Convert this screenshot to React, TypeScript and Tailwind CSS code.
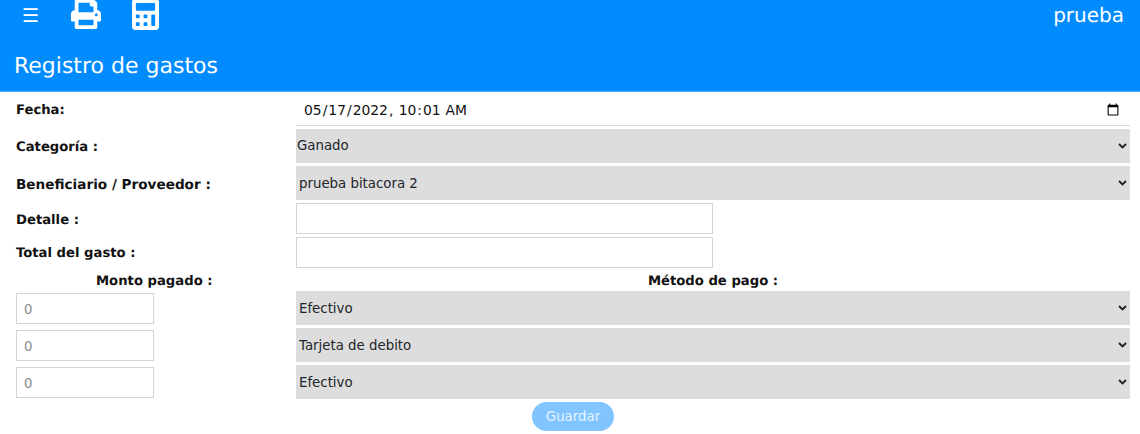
import { FaPrint, FaCalculator } from 'react-icons/fa';

const chevron = "bg-[url(data:image/svg+xml,%3Csvg%20xmlns=%27http://www.w3.org/2000/svg%27%20width=%279%27%20height=%276%27%3E%3Cpath%20d=%27M1%201l3.5%203.5%203.5-3.5%27%20fill=%27none%27%20stroke=%27%23222%27%20stroke-width=%271.9%27/%3E%3C/svg%3E)] bg-no-repeat bg-[position:right_3px_center]";
const selectCls = `h-[34px] flex-1 min-w-0 appearance-none bg-[#dddddd] ${chevron} border-0 text-[#212529] text-[13.33px] outline-none`;
const labelCls = "w-[280px] shrink-0 font-bold";

export default function App() {
    const pagos = ["Efectivo", "Tarjeta de debito", "Efectivo"];

    return (
        <div className="w-[1140px] h-[434px] overflow-hidden bg-white font-['DejaVu_Sans',sans-serif] text-[#111111] [text-rendering:geometricPrecision]">
            <header className="h-[92px] bg-[#008cff] border-b border-[#4db0ff] text-white">
                <div className="h-[53px] flex items-start">
                    <span className="ml-[22px] mt-[3px] w-[16px] text-[19px] leading-[26px]">☰</span>
                    <FaPrint className="ml-[33px] -mt-[1px] w-[30px] h-[30px]" />
                    <FaCalculator className="ml-[31px] -mt-[1px] w-[27px] h-[31px]" />
                    <span className="ml-auto mr-[16px] mt-[1px] text-[20px] leading-[28px]">prueba</span>
                </div>
                <h1 className="pl-[14px] pt-[1px] text-[22px] leading-[26px]">Registro de gastos</h1>
            </header>

            <form className="pl-[16px] pr-[10px] text-[13.2px]">
                <div className="flex items-center h-[34px] mb-[3px]">
                    <label className={`${labelCls} pt-[4px]`}>Fecha:</label>
                    <input
                        type="datetime-local"
                        defaultValue="2022-05-17T10:01"
                        className="flex-1 min-w-0 h-[34px] pl-[7px] pr-[8px] pt-[3px] border-b border-[#d8d8d8] text-[13.87px] outline-none"
                    />
                </div>
                <div className="flex items-center h-[34px] mb-[3px]">
                    <label className={`${labelCls} pt-[3px]`}>Categoría :</label>
                    <select className={`${selectCls} pl-[1px]`} defaultValue="Ganado"><option>Ganado</option></select>
                </div>
                <div className="flex items-center h-[34px] mb-[3px]">
                    <label className={`${labelCls} pt-[4px] text-[13.6px]`}>Beneficiario / Proveedor :</label>
                    <select className={`${selectCls} pl-[3px] pt-[1px]`} defaultValue="prueba bitacora 2"><option>prueba bitacora 2</option></select>
                </div>
                <div className="flex items-center h-[31px] mb-[3px]">
                    <label className={`${labelCls} pt-[4px]`}>Detalle :</label>
                    <input type="text" className="w-[417px] h-[31px] border border-[#d4d4d4] outline-none" />
                </div>
                <div className="flex items-center h-[31px]">
                    <label className={`${labelCls} pt-[3px]`}>Total del gasto :</label>
                    <input type="text" className="w-[417px] h-[31px] border border-[#d4d4d4] outline-none" />
                </div>

                <div className="flex h-[23px] items-center font-bold pt-[4px]">
                    <span className="w-[280px] shrink-0 pl-[80px]">Monto pagado :</span>
                    <span className="flex-1 text-center">Método de pago :</span>
                </div>

                {pagos.map((pago, idx) => (
                    <div key={idx} className="flex items-center h-[34px] mb-[3px]">
                        <div className="w-[280px] shrink-0">
                            <input
                                type="text"
                                placeholder="0"
                                className="block w-[138px] h-[31px] pl-[7px] pt-[2px] border border-[#d4d4d4] text-[13.33px] placeholder:text-[#8a8a8a] outline-none"
                            />
                        </div>
                        <select className={`${selectCls} pl-[3px] pt-[2px]`} defaultValue={pago}>
                            <option>Efectivo</option>
                            <option>Tarjeta de debito</option>
                        </select>
                    </div>
                ))}

                <div className="flex justify-center">
                    <button type="button" className="w-[82px] h-[29px] rounded-full bg-[#80c5ff] text-[#e6f4ff] text-[13.33px]">
                        Guardar
                    </button>
                </div>
            </form>
        </div>
    );
}
